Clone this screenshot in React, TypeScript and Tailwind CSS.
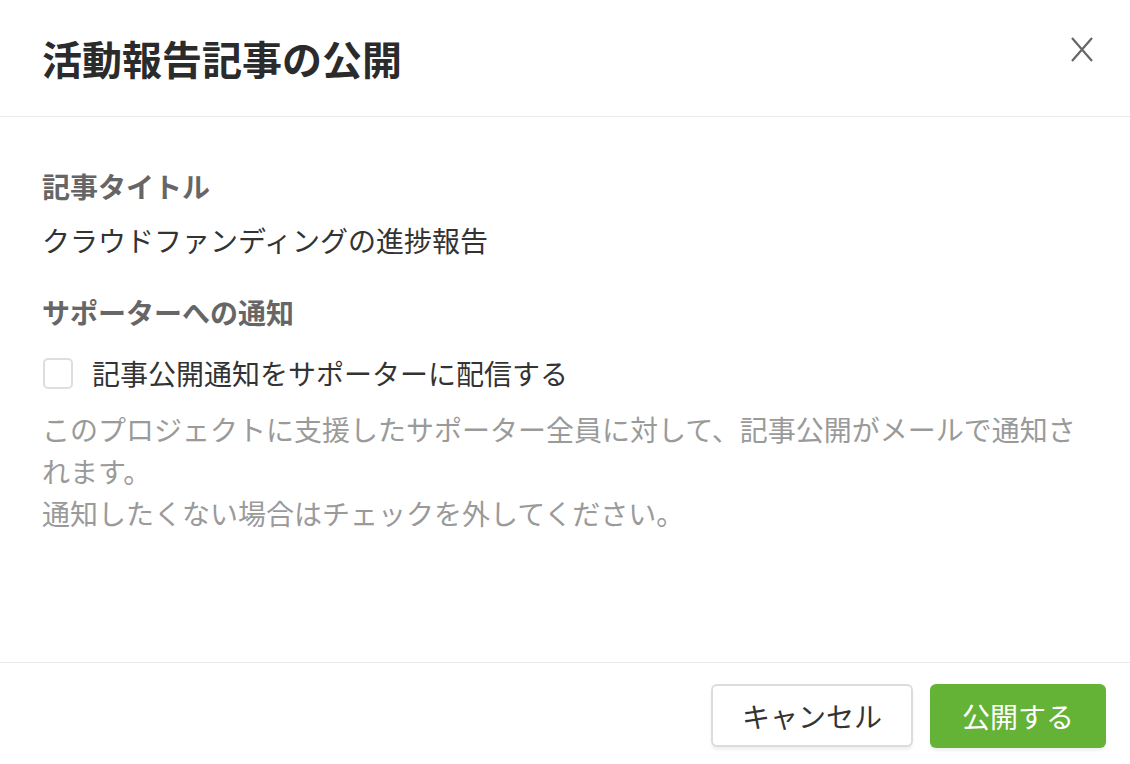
const font = "font-['Hiragino_Sans','Noto_Sans_CJK_JP',sans-serif]";

export default function App() {
  return (
    <div className={`flex h-[764px] w-[1130px] flex-col bg-white ${font}`}>
      <header className="flex h-[117px] shrink-0 items-center justify-between border-b border-[#ebebeb] pl-[42px] pr-[37px]">
        <h1 className="text-[40px] font-bold leading-none text-[#2b2b2b]">活動報告記事の公開</h1>
        <button className="mb-[17px] flex h-[25px] w-[22px] items-center justify-center" aria-label="閉じる">
          <svg width="22" height="25" viewBox="0 0 22 25" fill="none" stroke="#666" strokeWidth="2.2">
            <path d="M1 1 L21 24 M21 1 L1 24" />
          </svg>
        </button>
      </header>

      <main className="flex-1 px-[42px] pt-[48px] text-[28px] leading-[42px]">
        <p className="font-bold text-[#666]">記事タイトル</p>
        <p className="mt-[12px] text-[#333]">クラウドファンディングの進捗報告</p>

        <p className="mt-[30px] font-bold text-[#666]">サポーターへの通知</p>
        <label className="mt-[19px] flex items-center gap-[19px] pl-px">
          <span className="h-[31px] w-[30px] rounded-[5px] border-2 border-[#dedede] bg-white" />
          <span className="text-[#333]">記事公開通知をサポーターに配信する</span>
        </label>
        <p className="mt-[14px] text-[#9a9a9a]">
          このプロジェクトに支援したサポーター全員に対して、記事公開がメールで通知されます。
          <br />
          通知したくない場合はチェックを外してください。
        </p>
      </main>

      <footer className="flex shrink-0 justify-end gap-[17px] border-t border-[#ebebeb] pb-[16px] pl-[42px] pr-[24px] pt-[21px]">
        <button className="h-[63px] w-[202px] rounded-[6px] border-2 border-[#dcdcdc] bg-white text-[28px] text-[#333] shadow-[0_3px_3px_rgba(0,0,0,0.06)]">
          キャンセル
        </button>
        <button className="h-[64px] w-[176px] rounded-[6px] bg-[#64b236] text-[28px] text-white shadow-[0_3px_3px_rgba(0,0,0,0.06)]">
          公開する
        </button>
      </footer>
    </div>
  );
}
